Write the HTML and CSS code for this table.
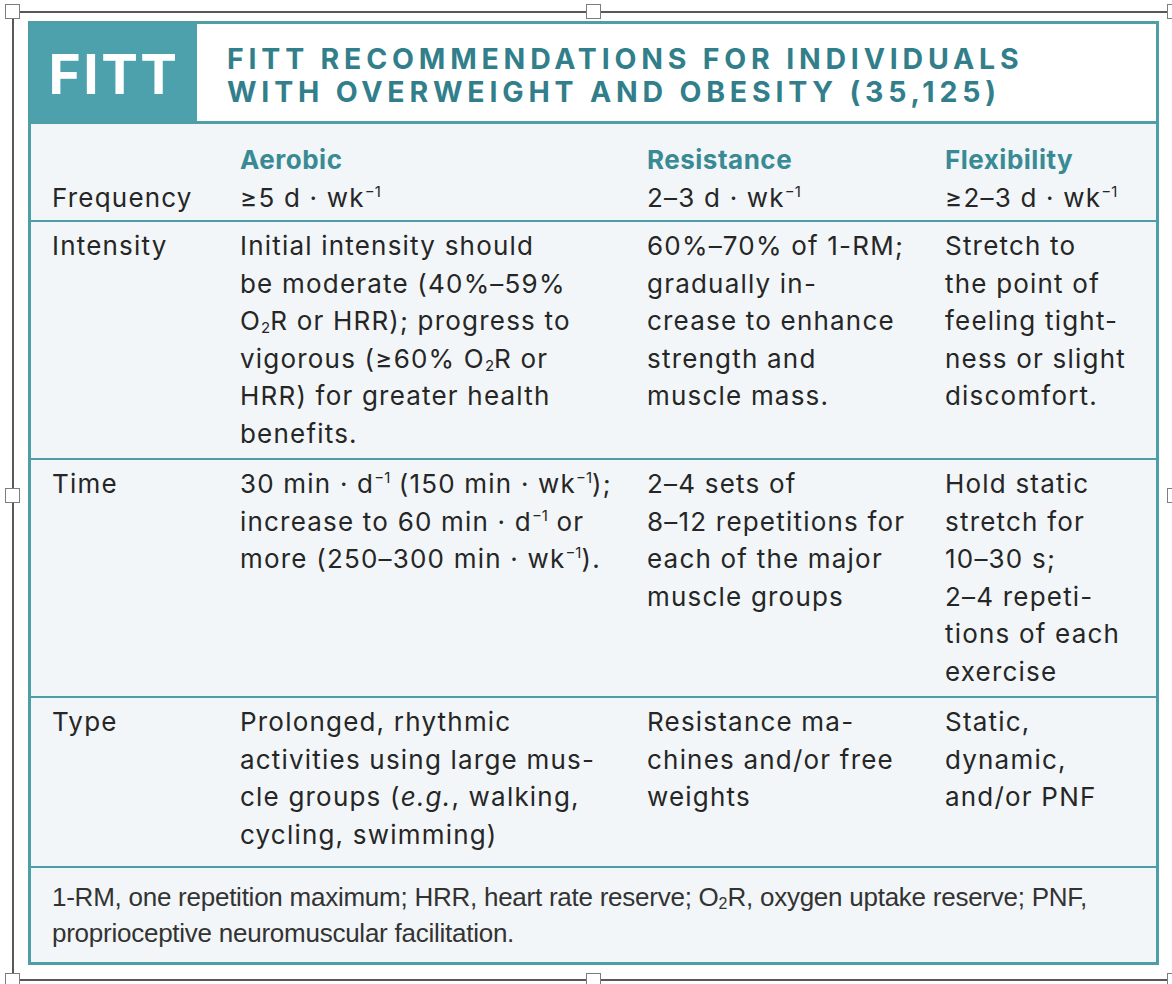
FILE: index.html
```html
<!DOCTYPE html>
<html lang="en">
<head>
<meta charset="utf-8">
<title>FITT Recommendations</title>
<link rel="stylesheet" href="styles.css">
</head>
<body>
<div class="frame">
  <span class="handle h-tl"></span>
  <span class="handle h-tm"></span>
  <span class="handle h-tr"></span>
  <span class="handle h-ml"></span>
  <span class="handle h-mr"></span>
  <span class="handle h-bl"></span>
  <span class="handle h-bm"></span>
  <span class="handle h-br"></span>

  <div class="card">
    <div class="header">
      <div class="fitt">FITT</div>
      <div class="title">FITT RECOMMENDATIONS FOR INDIVIDUALS<br>WITH OVERWEIGHT AND OBESITY (35,125)</div>
    </div>

    <div class="row row-head">
      <div class="label">Frequency</div>
      <div class="cell"><span class="colhead">Aerobic</span><br>≥5 d · wk<sup>−1</sup></div>
      <div class="cell"><span class="colhead">Resistance</span><br>2–3 d · wk<sup>−1</sup></div>
      <div class="cell"><span class="colhead">Flexibility</span><br>≥2–3 d · wk<sup>−1</sup></div>
    </div>

    <div class="row">
      <div class="label">Intensity</div>
      <div class="cell">Initial intensity should<br>be moderate (40%–59%<br>O<sub>2</sub>R or HRR); progress to<br>vigorous (≥60% O<sub>2</sub>R or<br>HRR) for greater health<br>benefits.</div>
      <div class="cell">60%–70% of 1-RM;<br>gradually in-<br>crease to enhance<br>strength and<br>muscle mass.</div>
      <div class="cell">Stretch to<br>the point of<br>feeling tight-<br>ness or slight<br>discomfort.</div>
    </div>

    <div class="row">
      <div class="label">Time</div>
      <div class="cell">30 min · d<sup>−1</sup> (150 min · wk<sup>−1</sup>);<br>increase to 60 min · d<sup>−1</sup> or<br>more (250–300 min · wk<sup>−1</sup>).</div>
      <div class="cell">2–4 sets of<br>8–12 repetitions for<br>each of the major<br>muscle groups</div>
      <div class="cell">Hold static<br>stretch for<br>10–30 s;<br>2–4 repeti-<br>tions of each<br>exercise</div>
    </div>

    <div class="row row-last">
      <div class="label">Type</div>
      <div class="cell">Prolonged, rhythmic<br>activities using large mus-<br>cle groups (<i>e.g.</i>, walking,<br>cycling, swimming)</div>
      <div class="cell">Resistance ma-<br>chines and/or free<br>weights</div>
      <div class="cell">Static,<br>dynamic,<br>and/or PNF</div>
    </div>

    <div class="note">1-RM, one repetition maximum; HRR, heart rate reserve; O<sub>2</sub>R, oxygen uptake reserve; PNF,<br>proprioceptive neuromuscular facilitation.</div>
  </div>
</div>
</body>
</html>
```

FILE: styles.css
```css
html, body {
  margin: 0;
  padding: 0;
  background: #ffffff;
  overflow: hidden;
}

body {
  width: 1172px;
  height: 984px;
  font-family: "Inter", "Noto Sans", sans-serif;
}

.frame {
  position: relative;
  box-sizing: border-box;
  width: 1163px;
  height: 970px;
  margin: 11px 0 0 12px;
  border: 2px solid #585858;
}

.handle {
  position: absolute;
  box-sizing: border-box;
  width: 15px;
  height: 15px;
  background: #ffffff;
  border: 1px solid #7d7d7d;
  z-index: 2;
}

.h-tl { top: -9px; left: -9px; }
.h-tm { top: -9px; left: calc(50% - 8px); }
.h-tr { top: -9px; right: -9px; }
.h-ml { top: calc(50% - 8px); left: -9px; }
.h-mr { top: calc(50% - 8px); right: -9px; }
.h-bl { bottom: -9px; left: -9px; }
.h-bm { bottom: -9px; left: calc(50% - 8px); }
.h-br { bottom: -9px; right: -9px; }

.card {
  box-sizing: border-box;
  width: 1131px;
  margin: 8px 0 0 14px;
  border: 3px solid #4e9ea8;
  background: #f2f6f8;
  color: #262626;
}

.header {
  display: flex;
  height: 97px;
  background: #ffffff;
  border-bottom: 3px solid #4e9ea8;
}

.fitt {
  width: 166px;
  background: #4ca1ac;
  color: #ffffff;
  font-weight: 700;
  font-size: 55px;
  letter-spacing: 2.5px;
  display: flex;
  align-items: center;
  justify-content: center;
  padding-top: 3px;
  box-sizing: border-box;
}

.title {
  padding: 18px 0 0 30px;
  color: #327f8b;
  font-weight: 700;
  font-size: 28.5px;
  line-height: 33px;
  letter-spacing: 4.8px;
}

.row {
  display: grid;
  grid-template-columns: 188px 407px 298px 1fr;
  padding: 5px 10px 6px 21px;
  font-size: 26px;
  line-height: 37.5px;
  letter-spacing: 1.2px;
  border-bottom: 2px solid #4e9ea8;
}

.row-head {
  padding-top: 17px;
  padding-bottom: 4px;
}

.row-head .label {
  align-self: end;
}

.row-last {
  padding-bottom: 13px;
}

.colhead {
  color: #3a8a96;
  font-weight: 700;
  letter-spacing: 0.5px;
}

sup {
  font-size: 15px;
  line-height: 0;
  letter-spacing: 0;
  vertical-align: 10px;
}

sub {
  font-size: 15px;
  line-height: 0;
  letter-spacing: 0;
  vertical-align: -3px;
}

.note {
  padding: 11px 10px 11px 21px;
  font-family: "Liberation Sans", Arial, sans-serif;
  font-size: 26px;
  line-height: 36px;
  letter-spacing: -0.25px;
  color: #333333;
}

.note sub {
  font-size: 16px;
}
```
